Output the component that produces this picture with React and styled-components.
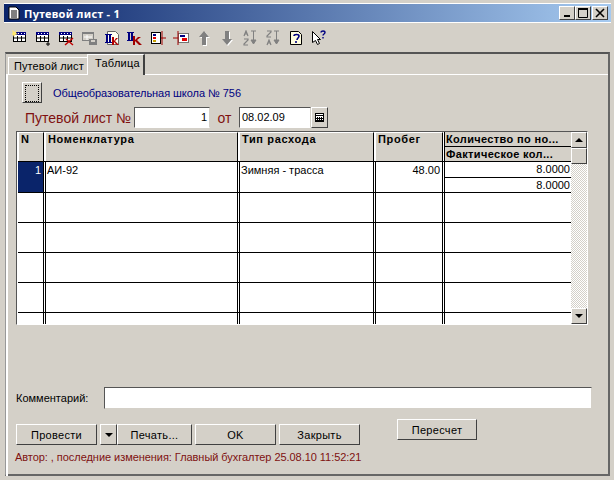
import React from 'react';
import styled, { createGlobalStyle } from 'styled-components';

const Global = createGlobalStyle`
  html, body { margin: 0; padding: 0; background: #d4d0c8; }
  * { box-sizing: border-box; }
`;

const Win = styled.div`
  width: 614px;
  height: 480px;
  padding: 3px 3px 0 4px;
  background: #d4d0c8;
  font-family: "Liberation Sans", Arial, sans-serif;
  font-size: 11px;
  color: #000;
  overflow: hidden;
`;

const TitleBar = styled.div`
  height: 20px;
  border-top: 1px solid #fff;
  border-bottom: 1px solid #fff;
  background: linear-gradient(90deg, #0a246a, #a6caf0);
  display: flex;
  align-items: center;
  padding: 0 3px 0 4px;
  color: #fff;
  font-family: "Noto Sans", sans-serif;
  font-weight: bold;
  font-size: 11px;
`;

const TitleText = styled.span`
  flex: 1;
  margin-left: 4px;
  letter-spacing: 0.3px;
`;

const CapButton = styled.button`
  width: 16px;
  height: 14px;
  padding: 0;
  margin-left: ${p => (p.$gap ? '1px' : '0')};
  background: #d4d0c8;
  border: 1px solid;
  border-color: #fff #404040 #404040 #fff;
  display: flex;
  align-items: center;
  justify-content: center;
`;

const Toolbar = styled.div`
  height: 29px;
  display: flex;
  align-items: center;
  padding-left: 8px;
  gap: 7px;
`;

const ToolIcon = styled.svg`
  width: 16px;
  height: 16px;
  display: block;
`;

const Frame = styled.div`
  height: 424px;
  width: 605px;
  margin-left: 1px;
  border: 1px solid;
  border-width: 2px 2px 2px 1px;
  border-color: #555 #666 #666 #999;
`;

const Tabs = styled.div`
  display: flex;
  align-items: flex-end;
  height: 20px;
  padding-left: 2px;
  position: relative;
  z-index: 1;
`;

const Tab = styled.div`
  height: ${p => (p.$active ? '21px' : '17px')};
  width: ${p => (p.$active ? '58px' : '79px')};
  padding-top: 2px;
  padding-left: ${p => (p.$active ? '7px' : '5px')};
  background: #d4d0c8;
  border-top: 1px solid #fff;
  border-left: 1px solid #fff;
  border-right: ${p => (p.$active ? '2px solid #404040' : '0')};
  font-size: 11px;
  letter-spacing: ${p => (p.$active ? '0.25px' : '0.1px')};
  white-space: nowrap;
  margin-bottom: ${p => (p.$active ? '-1px' : '0')};
`;

const Panel = styled.div`
  height: 402px;
  border-top: 1px solid #fff;
  border-left: 2px solid #fff;
  padding: 7px 0 0 8px;
`;

const OrgRow = styled.div`
  display: flex;
  align-items: center;
  height: 21px;
  padding-left: 6px;
  gap: 11px;
`;

const DotButton = styled.div`
  width: 20px;
  height: 21px;
  background: #d4d0c8;
  border: 1px solid;
  border-color: #fff #404040 #404040 #fff;
  padding: 2px;
  &::after {
    content: '';
    display: block;
    height: 100%;
    border: 1px dotted #000;
  }
`;

const OrgName = styled.span`
  color: #000080;
  font-size: 11px;
  letter-spacing: -0.05px;
`;

const DocRow = styled.div`
  display: flex;
  align-items: center;
  height: 21px;
  margin-top: 4px;
  padding-left: 9px;
`;

const RedLabel = styled.span`
  color: #7f1010;
  font-size: 14px;
  white-space: nowrap;
  width: ${p => p.$w}px;
  text-align: ${p => p.$align || 'left'};
`;

const Field = styled.div`
  height: 21px;
  width: ${p => p.$w}px;
  background: #fff;
  border: 1px solid;
  border-color: #555 #d4d0c8 #fff #555;
  padding: 3px 2px 0;
  font-size: 11px;
  text-align: ${p => p.$align || 'left'};
`;

const CalButton = styled.div`
  width: 17px;
  height: 21px;
  background: #d4d0c8;
  border: 1px solid;
  border-color: #fff #404040 #404040 #fff;
  display: flex;
  align-items: center;
  justify-content: center;
`;

const GridFrame = styled.div`
  width: 572px;
  height: 194px;
  margin-top: 3px;
  border: 1px solid;
  border-color: #555 #fff #fff #555;
  display: flex;
  background: #fff;
  overflow: hidden;
`;

const GridBody = styled.div`
  width: 554px;
  padding-left: 1px;
`;

const columns = '26px 193px 135px 68px 127px';

const Row = styled.div`
  display: grid;
  grid-template-columns: ${columns};
  column-gap: 1px;
  height: ${p => p.$h}px;
  border-bottom: 1px solid #000;
  background: #fff;
`;

const HeadCell = styled.div`
  background: #d4d0c8;
  border-left: 1px solid #fff;
  border-top: 1px solid #fff;
  border-right: 1px solid #000;
  padding: 0 2px;
  font-weight: bold;
  font-size: 11px;
  line-height: 13px;
  letter-spacing: 0.65px;
  white-space: nowrap;
`;

const HeadStack = styled.div`
  display: flex;
  flex-direction: column;
  background: #d4d0c8;
  border-left: 1px solid #000;
`;

const HeadSub = styled.div`
  flex: 1;
  padding: 0 1px;
  font-weight: bold;
  font-size: 11px;
  line-height: 14px;
  letter-spacing: 0.35px;
  white-space: nowrap;
  overflow: hidden;
  & + & { border-top: 1px solid #000; }
`;

const Cell = styled.div`
  background: ${p => (p.$selected ? '#0a246a' : '#fff')};
  color: ${p => (p.$selected ? '#fff' : '#000')};
  border-right: 1px solid #000;
  border-left: ${p => (p.$first ? '0' : '1px solid #000')};
  padding: 2px 2px 0 1px;
  text-align: ${p => p.$align || 'left'};
  font-size: 11px;
`;

const CellStack = styled.div`
  display: flex;
  flex-direction: column;
  border-left: 1px solid #000;
`;

const SubCell = styled.div`
  flex: 1;
  text-align: right;
  padding: 1px 1px 0;
  & + & { border-top: 1px solid #000; }
`;

const Scroll = styled.div`
  width: 16px;
  display: flex;
  flex-direction: column;
  background: repeating-conic-gradient(#d4d0c8 0 25%, #fff 0 50%) 0 0 / 2px 2px;
`;

const ScrollBtn = styled.div`
  height: 16px;
  flex: none;
  background: #d4d0c8;
  border: 1px solid;
  border-color: #fff #404040 #404040 #fff;
  display: flex;
  align-items: center;
  justify-content: center;
`;

const ScrollGap = styled.div`
  flex: 1;
`;

const Arrow = styled.i`
  width: 0;
  height: 0;
  border-left: 4px solid transparent;
  border-right: 4px solid transparent;
  ${p => (p.$up ? 'border-bottom: 4px solid #000;' : 'border-top: 4px solid #000;')}
`;

const CommentRow = styled.div`
  display: flex;
  align-items: center;
  margin-top: 62px;
  gap: 16px;
`;

const Comment = styled.div`
  width: 488px;
  height: 22px;
  background: #fff;
  border: 1px solid;
  border-color: #555 #d4d0c8 #d4d0c8 #555;
`;

const ActionArea = styled.div`
  display: flex;
  align-items: flex-start;
  margin-top: 10px;
`;

const ButtonGroup = styled.div`
  display: flex;
  margin-top: 5px;
  width: 381px;
`;

const Btn = styled.div`
  height: 21px;
  width: ${p => p.$w}px;
  margin-right: ${p => p.$mr || 0}px;
  background: #d4d0c8;
  border: 1px solid;
  border-color: #fff #404040 #404040 #fff;
  display: flex;
  align-items: center;
  justify-content: center;
  font-size: 11px;
  letter-spacing: 0.3px;
`;

const Status = styled.div`
  color: #7f1010;
  font-size: 11px;
  margin-top: 6px;
  margin-left: -1px;
  letter-spacing: -0.05px;
  white-space: nowrap;
`;

const GridIcon = ({ children }) => (
  <ToolIcon viewBox="0 0 16 16">
    <rect x="1.5" y="2.5" width="12" height="9" fill="#fff" stroke="#000" />
    <rect x="1" y="2" width="13" height="3" fill="#000080" />
    <path d="M3 3.500h1M6 3.500h1M9 3.500h1M12 3.500h1" stroke="#fff" />
    <path d="M2 8h11M5.500 6v5M9.500 6v5" stroke="#000" />
    {children}
  </ToolIcon>
);

const icons = [
  <GridIcon key="0"><path d="M0 0l3 2 2-2-1 3 2 1-3 1-1 2-1-2-2-1 2-1z" fill="#ffe870" /></GridIcon>,
  <GridIcon key="1"><path d="M11 14h4M13 12v4" stroke="#000" /></GridIcon>,
  <GridIcon key="2"><path d="M7 15l8-7M8 9l7 6" stroke="#c00000" strokeWidth="1.5" /></GridIcon>,
  <ToolIcon key="3" viewBox="0 0 16 16">
    <rect x="1.5" y="2.5" width="11" height="8" fill="#d4d0c8" stroke="#808080" />
    <rect x="1" y="2" width="12" height="2" fill="#808080" />
    <path d="M3 7h8M6 5v5" stroke="#fff" />
    <rect x="8" y="9" width="8" height="6" fill="#808080" />
    <rect x="10" y="10" width="4" height="2" fill="#d4d0c8" />
  </ToolIcon>,
  <ToolIcon key="4" viewBox="0 0 16 16">
    <path d="M3.500 1.500h8l3 3v10h-11z" fill="#fffef0" stroke="#666" />
    <path d="M1 4h7v1H7v7h1v1H1v-1h1V5H1zM4 5v7h1V5z" fill="#000080" />
    <path d="M8 7v8h2v-3l3 3h2l-4-4 3-3h-2l-2 3V7z" fill="#b00000" />
  </ToolIcon>,
  <ToolIcon key="5" viewBox="0 0 16 16">
    <path d="M0 2h7v1H6v7h1v1H0v-1h1V3H0zM3 3v7h1V3z" fill="#000080" />
    <path d="M6 6v9h2v-4l4 4h3l-5-5 4-3h-3l-3 3V6z" fill="#a00000" />
  </ToolIcon>,
  <ToolIcon key="6" viewBox="0 0 16 16">
    <rect x="1.5" y="2.5" width="9" height="11" fill="#fff" stroke="#000" />
    <rect x="3" y="4" width="3" height="2" fill="#000080" />
    <rect x="3" y="7" width="3" height="2" fill="#e00000" />
    <rect x="3" y="10" width="3" height="2" fill="#c8a000" />
    <path d="M11 8h5M12 1v14" stroke="#a00000" />
  </ToolIcon>,
  <ToolIcon key="7" viewBox="0 0 16 16">
    <rect x="5.500" y="3.500" width="10" height="9" fill="#fff" stroke="#000" strokeDasharray="1 1" />
    <rect x="7" y="5" width="5" height="2" fill="#000080" />
    <rect x="9" y="8" width="5" height="3" fill="#e00000" />
    <path d="M0 8h5M5 1v14" stroke="#a00000" />
  </ToolIcon>,
  <ToolIcon key="8" viewBox="0 0 16 16">
    <path d="M9 2l5 6h-3v8H7V8H4z" fill="#fff" />
    <path d="M8 1l5 6h-3v8H6V7H3z" fill="#808080" />
  </ToolIcon>,
  <ToolIcon key="9" viewBox="0 0 16 16">
    <path d="M9 16l5-6h-3V2H7v8H4z" fill="#fff" />
    <path d="M8 15l5-6h-3V1H6v8H3z" fill="#808080" />
  </ToolIcon>,
  <ToolIcon key="10" viewBox="0 0 16 16">
    <path d="M2 6l2-5 2 5M3 4h2M2 9h4v1l-4 4v1h4" fill="none" stroke="#808080" strokeWidth="1.2" />
    <path d="M9 1h5M11.500 1v9M9 10h5l-2.500 4z" fill="#808080" stroke="#808080" />
  </ToolIcon>,
  <ToolIcon key="11" viewBox="0 0 16 16">
    <path d="M2 1h4v1L2 6v1h4M2 15l2-5 2 5M3 13h2" fill="none" stroke="#808080" strokeWidth="1.2" />
    <path d="M9 1h5M11.500 1v9M9 10h5l-2.500 4z" fill="#808080" stroke="#808080" />
  </ToolIcon>,
  <ToolIcon key="12" viewBox="0 0 16 16">
    <path d="M2.500 1.500h8l3 3v10h-11z" fill="#fffde0" stroke="#000" />
    <path d="M6 6c0-2 5-2 5 0 0 2-2 2-2 4M8 11v2" fill="none" stroke="#000080" strokeWidth="1.6" />
  </ToolIcon>,
  <ToolIcon key="13" viewBox="0 0 16 16">
    <path d="M1.500 1.500v11l3-2 2 4 2-1-2-4h3z" fill="#fff" stroke="#000" />
    <path d="M10 2.500c0-2 4-2 4 0 0 1.500-2 1.500-2 3M12 7v1.500" fill="none" stroke="#000080" strokeWidth="1.4" />
  </ToolIcon>,
];

const rowsBelow = [30, 30, 30, 30, 30];

export default function App() {
  return (
    <Win>
      <Global />
      <TitleBar>
        <svg width="12" height="14" viewBox="0 0 12 14">
          <path d="M1 1h7l3 3v9H1z" fill="#fff" stroke="#000" />
          <path d="M3 5h6M3 7h6M3 9h6M3 11h6" stroke="#000" />
        </svg>
        <TitleText>Путевой лист - 1</TitleText>
        <CapButton>
          <svg width="10" height="10"><rect x="2" y="7" width="6" height="2" fill="#000" /></svg>
        </CapButton>
        <CapButton>
          <svg width="10" height="10"><path d="M0.500 1.500h9v8h-9z" fill="none" stroke="#000" /><path d="M0 1h10" stroke="#000" strokeWidth="2" /></svg>
        </CapButton>
        <CapButton $gap>
          <svg width="10" height="10"><path d="M1 1l8 8M9 1l-8 8" stroke="#000" strokeWidth="1.6" /></svg>
        </CapButton>
      </TitleBar>
      <Toolbar>{icons}</Toolbar>
      <Frame>
        <Tabs>
          <Tab>Путевой лист</Tab>
          <Tab $active>Таблица</Tab>
        </Tabs>
        <Panel>
          <OrgRow>
            <DotButton />
            <OrgName>Общеобразовательная школа № 756</OrgName>
          </OrgRow>
          <DocRow>
            <RedLabel $w={109}>Путевой лист №</RedLabel>
            <Field $w={76} $align="right">1</Field>
            <RedLabel $w={29} $align="center">от</RedLabel>
            <Field $w={72}>08.02.09</Field>
            <CalButton>
              <svg width="9" height="9"><rect x="0.500" y="0.500" width="8" height="8" fill="#fff" stroke="#000" /><path d="M0 2.500h9M2.500 4v5M4.500 4v5M6.500 4v5M1 5.500h7M1 7.500h7" stroke="#000" /></svg>
            </CalButton>
          </DocRow>
          <GridFrame>
            <GridBody>
              <Row $h={30}>
                <HeadCell>N</HeadCell>
                <HeadCell>Номенклатура</HeadCell>
                <HeadCell>Тип расхода</HeadCell>
                <HeadCell>Пробег</HeadCell>
                <HeadStack>
                  <HeadSub>Количество по но...</HeadSub>
                  <HeadSub>Фактическое кол...</HeadSub>
                </HeadStack>
              </Row>
              <Row $h={31}>
                <Cell $first $selected $align="right">1</Cell>
                <Cell>АИ-92</Cell>
                <Cell>Зимняя - трасса</Cell>
                <Cell $align="right">48.00</Cell>
                <CellStack>
                  <SubCell>8.0000</SubCell>
                  <SubCell>8.0000</SubCell>
                </CellStack>
              </Row>
              {rowsBelow.map((h, i) => (
                <Row key={i} $h={h}>
                  <Cell $first />
                  <Cell />
                  <Cell />
                  <Cell />
                  <CellStack />
                </Row>
              ))}
            </GridBody>
            <Scroll>
              <ScrollBtn><Arrow $up /></ScrollBtn>
              <ScrollBtn />
              <ScrollGap />
              <ScrollBtn><Arrow /></ScrollBtn>
            </Scroll>
          </GridFrame>
          <CommentRow>
            <span>Комментарий:</span>
            <Comment />
          </CommentRow>
          <ActionArea>
            <ButtonGroup>
              <Btn $w={81} $mr={3}>Провести</Btn>
              <Btn $w={17}><Arrow /></Btn>
              <Btn $w={75} $mr={3}>Печать...</Btn>
              <Btn $w={81} $mr={3}>OK</Btn>
              <Btn $w={81}>Закрыть</Btn>
            </ButtonGroup>
            <Btn $w={80}>Пересчет</Btn>
          </ActionArea>
          <Status>Автор: , последние изменения: Главный бухгалтер 25.08.10 11:52:21</Status>
        </Panel>
      </Frame>
    </Win>
  );
}
